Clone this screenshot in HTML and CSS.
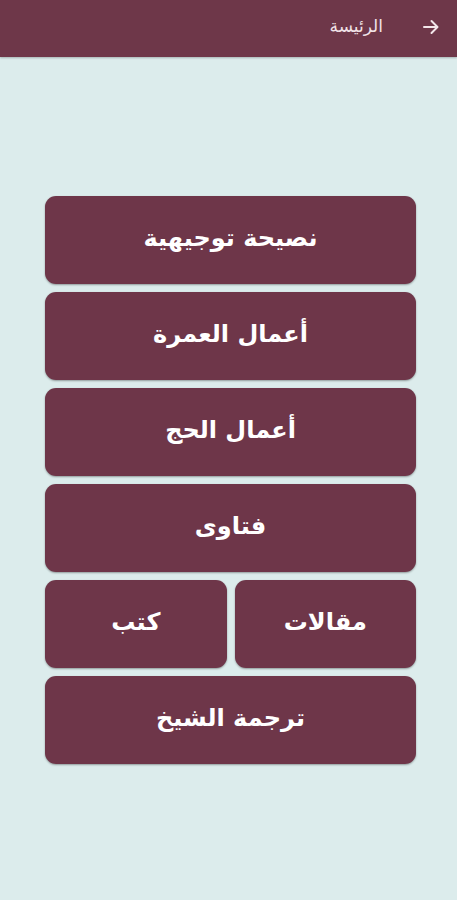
FILE: index.html
```html
<!DOCTYPE html>
<html lang="ar" dir="rtl">
<head>
<meta charset="utf-8">
<link rel="stylesheet" href="styles.css">
</head>
<body>
<header class="topbar">
  <span class="back">
    <svg width="20" height="20" viewBox="0 0 20 20"><path d="M3 10h13M10.5 4l6 6-6 6" fill="none" stroke="#f3e6ea" stroke-width="2" stroke-linecap="round" stroke-linejoin="round"/></svg>
  </span>
  <span class="title">الرئيسة</span>
</header>
<main class="menu">
  <a class="btn">نصيحة توجيهية</a>
  <a class="btn">أعمال العمرة</a>
  <a class="btn">أعمال الحج</a>
  <a class="btn">فتاوى</a>
  <div class="row">
    <a class="btn">مقالات</a>
    <a class="btn">كتب</a>
  </div>
  <a class="btn">ترجمة الشيخ</a>
</main>
</body>
</html>
```
FILE: styles.css
```css
html, body {
  margin: 0;
  padding: 0;
}
body {
  background: #dcecec;
  font-family: "DejaVu Sans", sans-serif;
  width: 457px;
  height: 900px;
}
.topbar {
  height: 57px;
  background: #6e3749;
  display: flex;
  align-items: center;
  padding: 0 16px 0 0;
  gap: 38px;
  box-shadow: 0 1px 2px rgba(0,0,0,0.25);
}
.back {
  display: flex;
  align-items: center;
  width: 20px;
  height: 20px;
  margin-top: -4px;
}
.title {
  color: #f1e3e8;
  font-size: 17px;
  margin-top: -6px;
}
.menu {
  display: flex;
  flex-direction: column;
  gap: 8px;
  padding: 139px 41px 0 45px;
}
.row {
  display: flex;
  gap: 8px;
}
.row .btn {
  flex: 1;
}
.btn {
  height: 88px;
  box-sizing: border-box;
  background: #6e3649;
  border-radius: 11px;
  color: #ffffff;
  font-weight: bold;
  font-size: 24px;
  display: flex;
  align-items: center;
  justify-content: center;
  box-shadow: 0 1px 2px rgba(0,0,0,0.35);
  padding-bottom: 4px;
}
```
